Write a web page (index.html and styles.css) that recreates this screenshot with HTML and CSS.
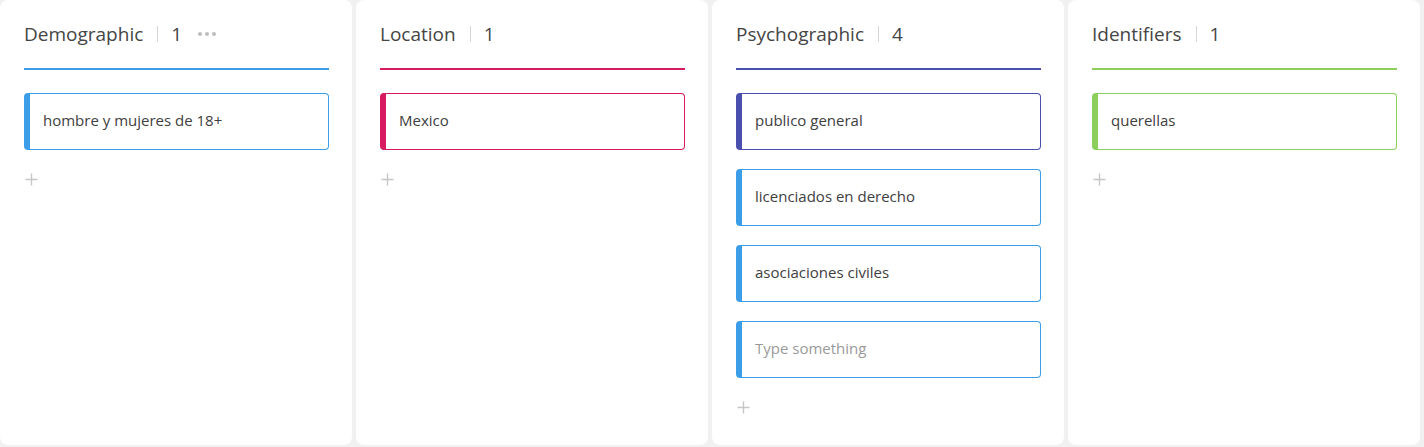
FILE: index.html
```html
<!DOCTYPE html>
<html lang="en">
<head>
<meta charset="utf-8">
<title>Audience board</title>
<link rel="stylesheet" href="styles.css">
</head>
<body>
<div class="board">
  <section class="col col-blue">
    <header class="col-head">
      <span class="col-title">Demographic</span>
      <span class="sep"></span>
      <span class="count">1</span>
      <span class="dots"><i></i><i></i><i></i></span>
    </header>
    <div class="rule"></div>
    <div class="cards">
      <div class="card">hombre y mujeres de 18+</div>
    </div>
    <div class="add"><svg width="13" height="13" viewBox="0 0 13 13"><path d="M6.5 0.5v12M0.5 6.5h12" stroke="#c6c6c6" stroke-width="1.4" fill="none"/></svg></div>
  </section>
  <section class="col col-pink">
    <header class="col-head">
      <span class="col-title">Location</span>
      <span class="sep"></span>
      <span class="count">1</span>
    </header>
    <div class="rule"></div>
    <div class="cards">
      <div class="card">Mexico</div>
    </div>
    <div class="add"><svg width="13" height="13" viewBox="0 0 13 13"><path d="M6.5 0.5v12M0.5 6.5h12" stroke="#c6c6c6" stroke-width="1.4" fill="none"/></svg></div>
  </section>
  <section class="col col-indigo">
    <header class="col-head">
      <span class="col-title">Psychographic</span>
      <span class="sep"></span>
      <span class="count">4</span>
    </header>
    <div class="rule"></div>
    <div class="cards">
      <div class="card">publico general</div>
      <div class="card card-blue">licenciados en derecho</div>
      <div class="card card-blue">asociaciones civiles</div>
      <div class="card card-blue placeholder">Type something</div>
    </div>
    <div class="add"><svg width="13" height="13" viewBox="0 0 13 13"><path d="M6.5 0.5v12M0.5 6.5h12" stroke="#c6c6c6" stroke-width="1.4" fill="none"/></svg></div>
  </section>
  <section class="col col-green">
    <header class="col-head">
      <span class="col-title">Identifiers</span>
      <span class="sep"></span>
      <span class="count">1</span>
    </header>
    <div class="rule"></div>
    <div class="cards">
      <div class="card">querellas</div>
    </div>
    <div class="add"><svg width="13" height="13" viewBox="0 0 13 13"><path d="M6.5 0.5v12M0.5 6.5h12" stroke="#c6c6c6" stroke-width="1.4" fill="none"/></svg></div>
  </section>
</div>
</body>
</html>
```
FILE: styles.css
```css
html, body {
  margin: 0;
  padding: 0;
  background: #f1f1f1;
  font-family: "Open Sans", "Noto Sans", sans-serif;
  color: #444;
}

.board {
  display: grid;
  grid-template-columns: repeat(4, 352px);
  gap: 4px;
  height: 445px;
}

.col {
  background: #fff;
  border-radius: 8px;
  padding: 0 23px 0 24px;
  display: flex;
  flex-direction: column;
}

.col-blue { --c: #3c9de8; }
.col-pink { --c: #d81b60; }
.col-indigo { --c: #4a4fae; }
.col-green { --c: #8ccf5c; }

.col-head {
  height: 68px;
  display: flex;
  align-items: center;
  padding-bottom: 1px;
  box-sizing: border-box;
}

.col-title {
  font-size: 19px;
  color: #454545;
}

.sep {
  width: 1px;
  height: 16px;
  background: #d6d6d6;
  margin: 0 13px 0 14px;
}

.count {
  font-size: 19px;
  color: #454545;
}

.dots {
  display: flex;
  gap: 3px;
  margin-left: 16px;
  margin-top: 1px;
}

.dots i {
  width: 4px;
  height: 4px;
  border-radius: 50%;
  background: #bdbdbd;
}

.rule {
  height: 2px;
  background: var(--c);
}

.cards {
  display: flex;
  flex-direction: column;
  gap: 19px;
  margin-top: 23px;
}

.card {
  --cc: var(--c);
  height: 57px;
  box-sizing: border-box;
  border: 1px solid var(--cc);
  border-left: 6px solid var(--cc);
  border-radius: 4px;
  display: flex;
  align-items: center;
  padding-left: 13px;
  padding-bottom: 4px;
  font-size: 15px;
  color: #404040;
}

.card-blue { --cc: #3c9de8; }

.placeholder {
  color: #9a9a9a;
}

.add {
  margin-top: 23px;
  margin-left: 1px;
  height: 13px;
  display: flex;
}
```
